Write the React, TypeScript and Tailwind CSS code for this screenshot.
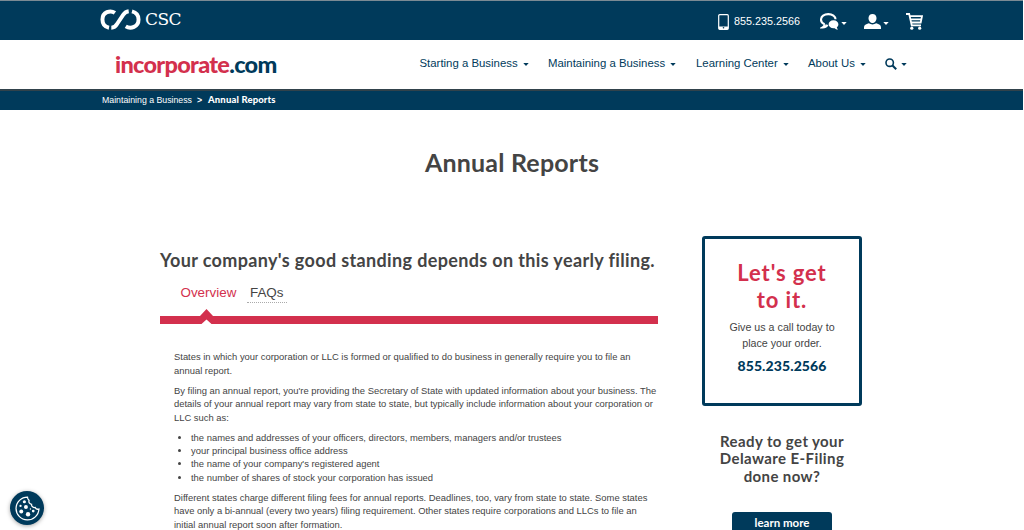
import type { ReactNode } from "react";

const navItems = [
  { label: "Starting a Business", width: "w-[128.5px]" },
  { label: "Maintaining a Business", width: "w-[148px]" },
  { label: "Learning Center", width: "w-[112px]" },
  { label: "About Us", width: "w-[76.5px]" },
];

const included = [
  "the names and addresses of your officers, directors, members, managers and/or trustees",
  "your principal business office address",
  "the name of your company's registered agent",
  "the number of shares of stock your corporation has issued",
];

function Caret({ className = "" }: { className?: string }) {
  return (
    <svg viewBox="0 0 6 3" className={`h-[3px] w-[6px] shrink-0 fill-current ${className}`}>
      <path d="M0.3 0h5.4L3 3z" />
    </svg>
  );
}

function CscMark() {
  return (
    <svg viewBox="0 0 124 64" className="h-[21px] w-[41px] fill-none stroke-white" strokeWidth="12">
      <path d="M45 12C31 2 7 9 7 32c0 15 9 23 20 25" />
      <path d="M34 57c9 0 14-5 18-12l18-27c5-7 9-10 17-11" />
      <path d="M97 7c12 3 20 12 20 25 0 23-24 30-39 21" />
    </svg>
  );
}

function PhoneIcon() {
  return (
    <svg viewBox="0 0 11 16" className="h-4 w-[11px]">
      <rect x="0.7" y="0.7" width="9.6" height="14.6" rx="1" fill="none" stroke="#fff" strokeWidth="1.2" />
      <path d="M1 12.5h9v2.500H1z" fill="#fff" />
      <circle cx="5.5" cy="13.7" r="0.8" fill="#003a5b" />
    </svg>
  );
}

function ChatIcon() {
  return (
    <svg viewBox="0 0 19 17" className="h-[17px] w-[19px]">
      <path
        d="M4.6 11.2C2.3 10.2 1 8.6 1 6.7 1 3.5 4.2 1.1 8.3 1.1s7.2 2.3 7.2 5.2M4.6 11.2c0 1.4-.8 2.5-1.9 3.2 2.2 0 3.8-.9 4.9-2.5"
        fill="none"
        stroke="#fff"
        strokeWidth="2.1"
      />
      <path
        d="M13.5 7.3c2.8 0 4.9 1.7 4.9 4 0 1.3-.6 2.3-1.6 3 .1 1 .6 1.7 1.3 2.2-1.4.1-2.6-.4-3.4-1.3-3.6.4-6.1-1.4-6.1-3.9 0-2.3 2.1-4 4.9-4z"
        fill="#fff"
      />
    </svg>
  );
}

function UserIcon() {
  return (
    <svg viewBox="0 0 17 15" className="h-[15px] w-[17px] fill-white">
      <path d="M8.5 0c2.4 0 4 1.6 4 4.1 0 2.7-1.7 5-4 5s-4-2.3-4-5C4.5 1.6 6.1 0 8.5 0z" />
      <path d="M0 15v-1.8c0-1.9 2-3.1 4.8-3.9 2.3 1.5 5.1 1.5 7.4 0 2.8.8 4.8 2 4.8 3.9V15z" />
    </svg>
  );
}

function CartIcon() {
  return (
    <svg viewBox="0 0 17 17" className="h-[17px] w-[17px]">
      <path
        d="M0 1h3.2l2.5 11.3H15M3.7 3.2H16l-1.3 6.3H5.1M4.4 6.3h10.9"
        fill="none"
        stroke="#fff"
        strokeWidth="1.8"
      />
      <circle cx="5.8" cy="15.2" r="1.6" fill="#fff" />
      <circle cx="13.7" cy="15.2" r="1.6" fill="#fff" />
    </svg>
  );
}

function SearchIcon() {
  return (
    <svg viewBox="0 0 12 12" className="h-3 w-3 fill-none stroke-[#003a5b]">
      <circle cx="4.7" cy="4.7" r="3.7" strokeWidth="1.6" />
      <path d="M7.5 7.5l3.7 3.7" strokeWidth="2.1" />
    </svg>
  );
}

function CookieIcon() {
  return (
    <svg viewBox="0 0 24 24" className="size-[25px]">
      <path
        d="M12 1a11 11 0 1 0 11 11.5c-1.5.5-3-.1-3.6-1.5-2 .4-3.7-1-3.500-3-2-.4-3-2-2.400-3.800C12.500 3.500 12 2.300 12 1z"
        fill="none"
        stroke="#fff"
        strokeWidth="1.2"
      />
      <g fill="#fff">
        <circle cx="9" cy="5.5" r="1.5" />
        <circle cx="5.3" cy="9.5" r="1.1" />
        <circle cx="10.5" cy="10.5" r="1.9" />
        <circle cx="6" cy="14.8" r="1.9" />
        <circle cx="12.5" cy="17.5" r="2.1" />
        <circle cx="17.5" cy="14.5" r="1.3" />
        <circle cx="14.8" cy="12.5" r="0.7" />
      </g>
    </svg>
  );
}

function Para({ children }: { children: ReactNode }) {
  return <p className="mb-[6.7px] whitespace-nowrap">{children}</p>;
}

export default function App() {
  return (
    <div className="relative h-[530px] w-[1024px] overflow-hidden bg-white font-['Liberation_Sans',sans-serif] text-[#444]">
      <div className="mr-px flex h-10 items-start border-t border-[#7b8a94] bg-[#003a5b] pl-[100px] text-white">
        <div className="mt-[8px] flex">
          <CscMark />
          <span className="-mt-px ml-1 font-['DejaVu_Serif',serif] text-[17px] leading-[22px] tracking-[-0.6px]">CSC</span>
        </div>
        <div className="mr-[100px] ml-auto mt-3 flex h-[17px] items-center">
          <PhoneIcon />
          <span className="ml-[5px] w-[66px] text-[10.8px] whitespace-nowrap">855.235.2566</span>
          <span className="ml-5 flex items-center">
            <ChatIcon />
            <Caret className="mt-1 ml-[2px]" />
          </span>
          <span className="ml-[17px] flex items-center">
            <UserIcon />
            <Caret className="mt-1 ml-[2px]" />
          </span>
          <span className="ml-[17px]">
            <CartIcon />
          </span>
        </div>
      </div>

      <header className="flex h-[49px] items-start pl-[115px]">
        <div className="mt-[9px] w-[304.5px] font-['Lato',sans-serif] text-[23.5px] leading-[30px] font-black tracking-[-0.7px] text-[#d3304d]">
          incorporate<span className="text-[#003a5b]">.com</span>
        </div>
        <nav className="mt-4 flex h-4 items-center text-[11.4px] text-[#003a5b]">
          {navItems.map((item) => (
            <a key={item.label} className={`flex items-center whitespace-nowrap ${item.width}`}>
              {item.label}
              <Caret className="ml-[5px]" />
            </a>
          ))}
          <SearchIcon />
          <Caret className="ml-1" />
        </nav>
      </header>

      <div className="mr-px flex h-[21px] items-center border-t-2 border-[#31424b] bg-[#003a5b] pl-[102px] text-[8.75px] whitespace-nowrap text-white">
        <span className="w-[95px]">Maintaining a Business</span>
        <span className="w-[11px] font-bold">&gt;</span>
        <b className="font-['Lato',sans-serif] text-[9.5px] font-black tracking-[0.15px]">Annual Reports</b>
      </div>

      <h1 className="mt-[36px] text-center font-['Lato',sans-serif] text-[25px] leading-[32px] font-bold tracking-[0.2px]">
        Annual Reports
      </h1>

      <div className="mt-[70px] flex pl-40">
        <main className="w-[498px]">
          <h2 className="h-[24px] font-['Lato',sans-serif] text-[18px] leading-[24px] font-bold tracking-[0.36px] whitespace-nowrap">
            Your company's good standing depends on this yearly filing.
          </h2>
          <div className="mt-[12px] flex h-[19px] pl-[20px] text-[13.4px] leading-[18px]">
            <span className="w-[67px] pl-[0.5px] text-[#d3304d]">Overview</span>
            <span className="w-10 border-b border-dotted border-[#aaa] pl-[3px]">FAQs</span>
          </div>
          <svg viewBox="0 0 498 15" className="mt-[6px] h-[15px] w-[498px]">
            <path d="M0 7h40L46.5 0 53 7h445v8H51.5L46.5 10.5 41.5 15H0z" fill="#d3304d" />
          </svg>

          <article className="mt-[26.2px] pl-[14px] text-[9.42px] leading-[13.4px]">
            <Para>
              States in which your corporation or LLC is formed or qualified to do business in generally require you to file an
              <br />
              annual report.
            </Para>
            <Para>
              By filing an annual report, you're providing the Secretary of State with updated information about your business. The
              <br />
              details of your annual report may vary from state to state, but typically include information about your corporation or
              <br />
              LLC such as:
            </Para>
            <ul className="mb-[6.7px] list-disc pl-[17px] whitespace-nowrap">
              {included.map((text) => (
                <li key={text}>{text}</li>
              ))}
            </ul>
            <Para>
              Different states charge different filing fees for annual reports. Deadlines, too, vary from state to state. Some states
              <br />
              have only a bi-annual (every two years) filing requirement. Other states require corporations and LLCs to file an
              <br />
              initial annual report soon after formation.
            </Para>
          </article>
        </main>

        <aside className="-mt-3 ml-11 w-40 text-center">
          <div className="h-[170px] rounded-[3px] border-[3px] border-[#003a5b] pt-[20px]">
            <div className="font-['Lato',sans-serif] text-[22px] leading-[27px] font-bold tracking-[0.9px] text-[#d3304d]">
              Let's get
              <br />
              to it.
            </div>
            <p className="mt-[7px] text-[10.7px] leading-[15.5px] whitespace-nowrap">
              Give us a call today to
              <br />
              place your order.
            </p>
            <div className="mt-[5px] font-['Lato',sans-serif] text-[14px] leading-[19px] font-black tracking-[0.1px] text-[#003a5b]">
              855.235.2566
            </div>
          </div>
          <div className="mt-[27px] font-['Lato',sans-serif] text-[15px] leading-[17.3px] font-bold tracking-[0.4px] whitespace-nowrap">
            Ready to get your
            <br />
            Delaware E-Filing
            <br />
            done now?
          </div>
          <a className="mx-auto mt-[27px] block h-[26px] w-[100px] rounded-[3px] bg-[#003a5b] font-['Lato',sans-serif] text-[11.5px] leading-[22px] font-bold text-white">
            learn more
          </a>
        </aside>
      </div>

      <button
        aria-label="Cookie settings"
        className="absolute top-[491px] left-[10px] flex size-[34px] items-center justify-center rounded-full bg-[#003a5b] shadow-[0_1px_4px_rgba(0,0,0,0.35)]"
      >
        <CookieIcon />
      </button>
    </div>
  );
}
